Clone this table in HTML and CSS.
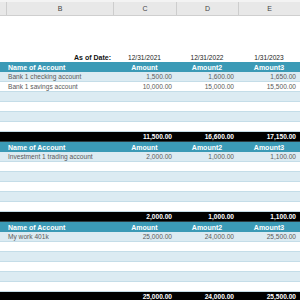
FILE: index.html
```html
<!DOCTYPE html>
<html>
<head>
<meta charset="utf-8">
<link rel="stylesheet" href="styles.css">
</head>
<body>
<div class="sheet">
  <div class="colhead">
    <div class="ch"></div>
    <div class="ch">B</div>
    <div class="ch">C</div>
    <div class="ch">D</div>
    <div class="ch">E</div>
  </div>
  <div class="blank"></div>
  <div class="row dates">
    <div class="name label">As of Date:</div>
    <div class="c">12/31/2021</div>
    <div class="c">12/31/2022</div>
    <div class="c">1/31/2023</div>
  </div>

  <div class="row head">
    <div class="name">Name of Account</div>
    <div class="c">Amount</div>
    <div class="c">Amount2</div>
    <div class="c">Amount3</div>
  </div>
  <div class="row band"><div class="name">Bank 1 checking account</div><div class="n">1,500.00</div><div class="n">1,600.00</div><div class="n">1,650.00</div></div>
  <div class="row"><div class="name">Bank 1 savings account</div><div class="n">10,000.00</div><div class="n">15,000.00</div><div class="n">15,500.00</div></div>
  <div class="row band"><div class="name"></div><div class="n"></div><div class="n"></div><div class="n"></div></div>
  <div class="row"><div class="name"></div><div class="n"></div><div class="n"></div><div class="n"></div></div>
  <div class="row band"><div class="name"></div><div class="n"></div><div class="n"></div><div class="n"></div></div>
  <div class="row"><div class="name"></div><div class="n"></div><div class="n"></div><div class="n"></div></div>
  <div class="row total"><div class="name"></div><div class="n">11,500.00</div><div class="n">16,600.00</div><div class="n">17,150.00</div></div>

  <div class="row head">
    <div class="name">Name of Account</div>
    <div class="c">Amount</div>
    <div class="c">Amount2</div>
    <div class="c">Amount3</div>
  </div>
  <div class="row band"><div class="name">Investment 1 trading account</div><div class="n">2,000.00</div><div class="n">1,000.00</div><div class="n">1,100.00</div></div>
  <div class="row"><div class="name"></div><div class="n"></div><div class="n"></div><div class="n"></div></div>
  <div class="row band"><div class="name"></div><div class="n"></div><div class="n"></div><div class="n"></div></div>
  <div class="row"><div class="name"></div><div class="n"></div><div class="n"></div><div class="n"></div></div>
  <div class="row band"><div class="name"></div><div class="n"></div><div class="n"></div><div class="n"></div></div>
  <div class="row"><div class="name"></div><div class="n"></div><div class="n"></div><div class="n"></div></div>
  <div class="row total"><div class="name"></div><div class="n">2,000.00</div><div class="n">1,000.00</div><div class="n">1,100.00</div></div>

  <div class="row head">
    <div class="name">Name of Account</div>
    <div class="c">Amount</div>
    <div class="c">Amount2</div>
    <div class="c">Amount3</div>
  </div>
  <div class="row band"><div class="name">My work 401k</div><div class="n">25,000.00</div><div class="n">24,000.00</div><div class="n">25,500.00</div></div>
  <div class="row"><div class="name"></div><div class="n"></div><div class="n"></div><div class="n"></div></div>
  <div class="row band"><div class="name"></div><div class="n"></div><div class="n"></div><div class="n"></div></div>
  <div class="row"><div class="name"></div><div class="n"></div><div class="n"></div><div class="n"></div></div>
  <div class="row band"><div class="name"></div><div class="n"></div><div class="n"></div><div class="n"></div></div>
  <div class="row"><div class="name"></div><div class="n"></div><div class="n"></div><div class="n"></div></div>
  <div class="row total"><div class="name"></div><div class="n">25,000.00</div><div class="n">24,000.00</div><div class="n">25,500.00</div></div>
</div>
</body>
</html>
```

FILE: styles.css
```css
html, body {
  margin: 0;
  padding: 0;
  background: #ffffff;
}
.sheet {
  width: 300px;
  height: 300px;
  overflow: hidden;
  font-family: "Liberation Sans", Arial, sans-serif;
  font-variant-numeric: oldstyle-nums;
}
.colhead {
  display: grid;
  grid-template-columns: 6px 107px 63px 62px 62px;
  height: 16px;
  box-sizing: border-box;
  border-top: 2px solid #f3f3f3;
  border-bottom: 1px solid #cfcfcf;
  background: #e8e8e8;
}
.ch {
  border-left: 1px solid #cdcdcd;
  font-size: 7px;
  color: #444;
  display: flex;
  align-items: center;
  justify-content: center;
}
.ch:first-child {
  border-left: none;
}
.blank {
  height: 36px;
}
.row {
  display: grid;
  grid-template-columns: 113px 63px 62px 62px;
  height: 10px;
  box-sizing: border-box;
  font-size: 6.6px;
  color: #5a5a5a;
  background: #ffffff;
  border-bottom: 1px solid #c4dde8;
}
.row > div {
  display: flex;
  align-items: center;
  white-space: nowrap;
  overflow: hidden;
}
.row .name {
  padding-left: 8px;
}
.row .n {
  justify-content: flex-end;
  padding-right: 4px;
}
.row .c {
  justify-content: center;
}
.band {
  background: #dcebf2;
}
.dates {
  border-bottom: none;
  color: #222;
}
.dates .label {
  justify-content: flex-end;
  padding-right: 2px;
  font-weight: bold;
  color: #111;
  font-size: 7px;
}
.head {
  background: #3b9ab6;
  color: #ffffff;
  font-weight: bold;
  font-size: 7px;
  border-bottom: none;
}
.total {
  background: #000000;
  color: #ffffff;
  font-weight: bold;
  border-bottom: 1px solid #2b3b40;
}
```
